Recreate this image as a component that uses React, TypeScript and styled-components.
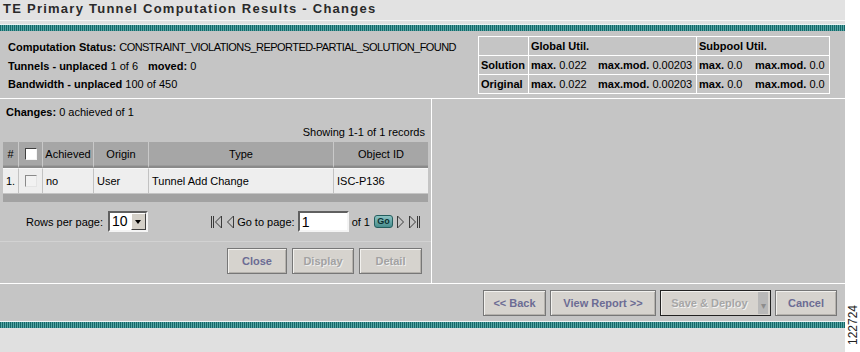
import styled, { createGlobalStyle } from "styled-components";

const FONT = `"Liberation Sans", Arial, Helvetica, sans-serif`;
const PANEL = "#c5c5c5";

const GlobalStyle = createGlobalStyle`
  body {
    margin: 0;
    background: #ffffff;
    font-family: ${FONT};
    font-size: 11px;
    color: #000;
  }
`;

type Tone = "active" | "muted";

function FirstIcon() {
  return (
    <svg width="13" height="14" viewBox="0 0 13 14">
      <line x1="1.5" y1="1" x2="1.5" y2="13" stroke="#3a3a3a" />
      <line x1="3.5" y1="1" x2="3.5" y2="13" stroke="#3a3a3a" />
      <polygon points="11.5,1 5.5,7 11.5,13" fill="none" stroke="#3a3a3a" />
    </svg>
  );
}

function PrevIcon() {
  return (
    <svg width="8" height="14" viewBox="0 0 8 14">
      <polygon points="7.5,1 1.5,7 7.5,13" fill="none" stroke="#3a3a3a" />
    </svg>
  );
}

function NextIcon() {
  return (
    <svg width="8" height="14" viewBox="0 0 8 14">
      <polygon points="0.5,1 6.5,7 0.5,13" fill="none" stroke="#3a3a3a" />
    </svg>
  );
}

function LastIcon() {
  return (
    <svg width="13" height="14" viewBox="0 0 13 14">
      <polygon points="1.5,1 7.5,7 1.5,13" fill="none" stroke="#3a3a3a" />
      <line x1="9.5" y1="1" x2="9.5" y2="13" stroke="#3a3a3a" />
      <line x1="11.5" y1="1" x2="11.5" y2="13" stroke="#3a3a3a" />
    </svg>
  );
}

export default function App() {
  return (
    <>
      <GlobalStyle />
      <St.Frame>
        <St.Page>
          <St.TitleBar>TE Primary Tunnel Computation Results - Changes</St.TitleBar>
          <St.Stripe />

          <St.Summary>
            <St.StatusList>
              <div>
                <b>Computation Status:</b> <St.Squeeze>CONSTRAINT_VIOLATIONS_REPORTED-PARTIAL_SOLUTION_FOUND</St.Squeeze>
              </div>
              <div>
                <b>Tunnels - unplaced</b> 1 of 6<St.Spaced><b>moved:</b> 0</St.Spaced>
              </div>
              <div>
                <b>Bandwidth - unplaced</b> 100 of 450
              </div>
            </St.StatusList>

            <St.UtilGrid>
              <St.UtilCell />
              <St.UtilCell $span={2}>
                <b>Global Util.</b>
              </St.UtilCell>
              <St.UtilCell $span={2}>
                <b>Subpool Util.</b>
              </St.UtilCell>

              {["Solution", "Original"].map((label) => (
                <St.UtilRow key={label}>
                  <St.UtilCell>
                    <b>{label}</b>
                  </St.UtilCell>
                  <St.UtilCell $join>
                    <b>max.</b> 0.022
                  </St.UtilCell>
                  <St.UtilCell>
                    <b>max.mod.</b> 0.00203
                  </St.UtilCell>
                  <St.UtilCell $join>
                    <b>max.</b> 0.0
                  </St.UtilCell>
                  <St.UtilCell>
                    <b>max.mod.</b> 0.0
                  </St.UtilCell>
                </St.UtilRow>
              ))}
            </St.UtilGrid>
          </St.Summary>

          <St.Lower>
            <St.LeftPanel>
              <St.ChangesLine>
                <b>Changes:</b> 0 achieved of 1
              </St.ChangesLine>
              <St.RecordsLine>Showing 1-1 of 1 records</St.RecordsLine>

              <St.Table>
                <St.HeadCell>#</St.HeadCell>
                <St.HeadCell>
                  <St.Check />
                </St.HeadCell>
                <St.HeadCell>Achieved</St.HeadCell>
                <St.HeadCell>Origin</St.HeadCell>
                <St.HeadCell>Type</St.HeadCell>
                <St.HeadCell>Object ID</St.HeadCell>

                <St.DataCell>1.</St.DataCell>
                <St.DataCell $center>
                  <St.Check $dim />
                </St.DataCell>
                <St.DataCell>no</St.DataCell>
                <St.DataCell>User</St.DataCell>
                <St.DataCell>Tunnel Add Change</St.DataCell>
                <St.DataCell>ISC-P136</St.DataCell>

                <St.TableFoot />
              </St.Table>

              <St.PagerRow>
                <St.Group>
                  Rows per page:
                  <St.Select>
                    <St.SelectValue>10</St.SelectValue>
                    <St.SelectArrow />
                  </St.Select>
                </St.Group>
                <St.Group>
                  <FirstIcon />
                  <PrevIcon />
                  <span>Go to page:</span>
                  <St.PageInput defaultValue="1" />
                  <span>of 1</span>
                  <St.GoButton>Go</St.GoButton>
                  <NextIcon />
                  <LastIcon />
                </St.Group>
              </St.PagerRow>

              <St.PanelButtons>
                <St.Button $w={60} $tone="active">
                  Close
                </St.Button>
                <St.Button $w={62} $tone="muted">
                  Display
                </St.Button>
                <St.Button $w={63} $tone="muted">
                  Detail
                </St.Button>
              </St.PanelButtons>
            </St.LeftPanel>
            <St.RightPanel />
          </St.Lower>

          <St.BottomBar>
            <St.Button $w={63} $tone="active">
              &lt;&lt; Back
            </St.Button>
            <St.Button $w={106} $tone="active">
              View Report &gt;&gt;
            </St.Button>
            <St.SplitButton>
              <St.SplitLabel>Save &amp; Deploy</St.SplitLabel>
              <St.SplitArrow>▾</St.SplitArrow>
            </St.SplitButton>
            <St.Button $w={62} $tone="active">
              Cancel
            </St.Button>
          </St.BottomBar>

          <St.Stripe />
          <St.Footer />
        </St.Page>
        <St.FigureNo>122724</St.FigureNo>
      </St.Frame>
    </>
  );
}

const St = {
  Frame: styled.div`
    position: relative;
    width: 860px;
    height: 352px;
    overflow: hidden;
  `,

  Page: styled.div`
    width: 845px;
  `,

  TitleBar: styled.div`
    height: 24px;
    box-sizing: border-box;
    padding: 1px 0 0 3px;
    background: linear-gradient(#e2e2e2 0 20px, #f6f6f6 20px 21px, #e0e0e0 21px);
    font-size: 13px;
    font-weight: bold;
    letter-spacing: 1.25px;
    line-height: 16px;
    color: #2a2a2a;
  `,

  Stripe: styled.div`
    height: 6px;
    border-top: 1px solid #eef4f4;
    background: repeating-linear-gradient(90deg, #146868 0 1px, #55a3a3 1px 2px);
  `,

  Summary: styled.div`
    display: flex;
    justify-content: space-between;
    align-items: flex-start;
    height: 68px;
    box-sizing: border-box;
    padding: 5px 15px 0 8px;
    background: ${PANEL};
    border-bottom: 1px solid #ffffff;
  `,

  StatusList: styled.div`
    padding-top: 2px;
    line-height: 18.5px;
    white-space: nowrap;
  `,

  Squeeze: styled.span`
    letter-spacing: -0.55px;
  `,

  Spaced: styled.span`
    margin-left: 10px;
  `,

  UtilGrid: styled.div`
    display: grid;
    grid-template-columns: 50px 67px 101px 56px 77px;
    border-top: 1px solid #ffffff;
    border-left: 1px solid #ffffff;
    line-height: 18px;
    white-space: nowrap;
  `,

  UtilRow: styled.div`
    display: contents;
  `,

  UtilCell: styled.div<{ $span?: number; $join?: boolean }>`
    grid-column: span ${({ $span }) => $span ?? 1};
    height: 19px;
    box-sizing: border-box;
    padding-left: 2px;
    border-bottom: 1px solid #ffffff;
    border-right: ${({ $join }) => ($join ? "none" : "1px solid #ffffff")};
  `,

  Lower: styled.div`
    display: flex;
    height: 185px;
    box-sizing: border-box;
    background: ${PANEL};
    border-bottom: 1px solid #ffffff;
  `,

  LeftPanel: styled.div`
    width: 432px;
    box-sizing: border-box;
    border-right: 1px solid #ffffff;
    display: flex;
    flex-direction: column;
  `,

  RightPanel: styled.div`
    flex: 1;
  `,

  ChangesLine: styled.div`
    padding: 5px 6px 0;
    line-height: 16px;
  `,

  RecordsLine: styled.div`
    margin-top: 4px;
    padding-right: 6px;
    text-align: right;
    line-height: 16px;
  `,

  Table: styled.div`
    display: grid;
    grid-template-columns: 15px 24px 51px 55px 185px 95px;
    margin: 2px 3px 0;
  `,

  HeadCell: styled.div`
    display: flex;
    align-items: center;
    justify-content: center;
    height: 26px;
    box-sizing: border-box;
    background: #a6a6a6;
    border-bottom: 2px solid #8a8a8a;
    border-left: 1px solid #c9c9c9;
    box-shadow: inset 0 -1px 0 #9a9a9a;
    white-space: nowrap;

    &:first-child {
      border-left: none;
    }
  `,

  DataCell: styled.div<{ $center?: boolean }>`
    display: flex;
    align-items: center;
    justify-content: ${({ $center }) => ($center ? "center" : "flex-start")};
    height: 26px;
    box-sizing: border-box;
    padding-left: ${({ $center }) => ($center ? "0" : "3px")};
    background: #eeeeee;
    border-top: 1px solid #f8f8f8;
    border-bottom: 1px solid #c4c4c4;
    border-left: 1px solid #c2c2c2;
    white-space: nowrap;

    &:nth-child(7) {
      border-left: none;
    }
  `,

  TableFoot: styled.div`
    grid-column: 1 / -1;
    height: 8px;
    background: #a2a2a2;
  `,

  Check: styled.span<{ $dim?: boolean }>`
    display: block;
    width: 12px;
    height: 12px;
    box-sizing: border-box;
    background: ${({ $dim }) => ($dim ? "#f2f2f2" : "#ffffff")};
    border: 1px solid;
    border-color: ${({ $dim }) => ($dim ? "#8a8a8a #e4e4e4 #e4e4e4 #8a8a8a" : "#404040 #f4f4f4 #f4f4f4 #404040")};
  `,

  PagerRow: styled.div`
    display: flex;
    align-items: center;
    justify-content: space-between;
    height: 39px;
    padding: 0 10px 0 26px;
    border-bottom: 1px solid #d2d2d2;
  `,

  Group: styled.div`
    display: flex;
    align-items: center;
    gap: 3px;
    white-space: nowrap;
  `,

  Select: styled.div`
    display: flex;
    align-items: center;
    width: 40px;
    height: 21px;
    margin-left: 2px;
    box-sizing: border-box;
    background: #ffffff;
    border: 2px solid;
    border-color: #606060 #f4f4f4 #f4f4f4 #606060;
  `,

  SelectValue: styled.span`
    flex: 1;
    padding-left: 2px;
    font-size: 14px;
    line-height: 17px;
  `,

  SelectArrow: styled.span`
    position: relative;
    width: 15px;
    height: 17px;
    box-sizing: border-box;
    background: #d4d0c8;
    border: 1px solid;
    border-color: #ffffff #404040 #404040 #ffffff;

    &::after {
      content: "";
      position: absolute;
      left: 3px;
      top: 6px;
      border-left: 3.5px solid transparent;
      border-right: 3.5px solid transparent;
      border-top: 4px solid #000;
    }
  `,

  PageInput: styled.input`
    width: 51px;
    height: 21px;
    box-sizing: border-box;
    padding: 0 2px;
    margin: 0;
    background: #ffffff;
    border: 2px solid;
    border-color: #606060 #f4f4f4 #f4f4f4 #606060;
    font-family: ${FONT};
    font-size: 14px;
    outline: none;
  `,

  GoButton: styled.span`
    width: 19px;
    height: 13px;
    box-sizing: border-box;
    border: 1px solid #245e5e;
    border-radius: 3px;
    background: linear-gradient(#8cc2c2, #468c8c);
    color: #0b3030;
    font-size: 9px;
    font-weight: bold;
    line-height: 11px;
    text-align: center;
    margin: 0 1px;
  `,

  PanelButtons: styled.div`
    display: flex;
    justify-content: flex-end;
    gap: 5px;
    padding: 6px 9px 0 0;
  `,

  Button: styled.button<{ $w: number; $tone: Tone }>`
    width: ${({ $w }) => $w}px;
    height: 26px;
    padding: 0;
    background: #d6d3ce;
    border: 1px solid #777777;
    box-shadow: inset 1px 1px 0 #f2f1ee, inset -1px -1px 0 #b4b1ac;
    font-family: ${FONT};
    font-size: 11px;
    font-weight: bold;
    color: ${({ $tone }) => ($tone === "active" ? "#6c6c94" : "#a2a2a2")};
    text-shadow: ${({ $tone }) => ($tone === "muted" ? "1px 1px 0 #eeeeee" : "none")};
  `,

  SplitButton: styled.div`
    display: flex;
    width: 111px;
    height: 26px;
    box-sizing: border-box;
    background: #d6d3ce;
    border: 1px solid #222222;
    box-shadow: inset 1px 1px 0 #f2f1ee;
  `,

  SplitLabel: styled.span`
    flex: 1;
    display: flex;
    align-items: center;
    justify-content: center;
    font-size: 11px;
    font-weight: bold;
    color: #a6a6a6;
    text-shadow: 1px 1px 0 #f2f2f2;
  `,

  SplitArrow: styled.span`
    width: 10px;
    margin: 1px 2px 1px 0;
    background: #b8b8b8;
    color: #8c8c8c;
    font-size: 10px;
    line-height: 28px;
    text-align: center;
  `,

  BottomBar: styled.div`
    display: flex;
    justify-content: flex-end;
    align-items: center;
    gap: 4px;
    height: 37px;
    padding-right: 8px;
    background: ${PANEL};
  `,

  Footer: styled.div`
    height: 24px;
    background: #e0e0e0;
  `,

  FigureNo: styled.div`
    position: absolute;
    left: 847px;
    top: 305px;
    writing-mode: vertical-rl;
    transform: rotate(180deg);
    font-size: 12px;
    line-height: 12px;
    color: #222;
  `,
};
